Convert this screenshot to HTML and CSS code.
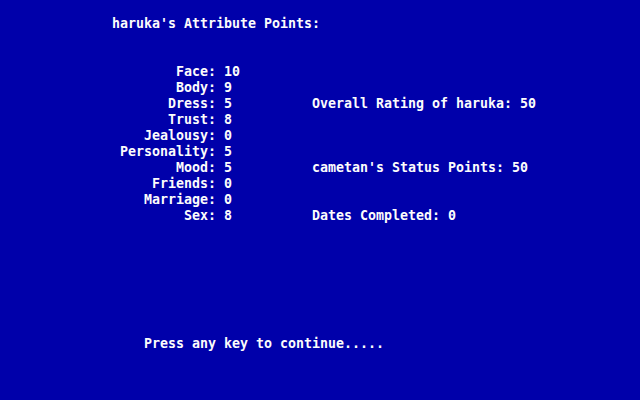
FILE: index.html
```html
<!DOCTYPE html>
<html>
<head>
<meta charset="utf-8">
<link rel="stylesheet" href="styles.css">
</head>
<body>
<div class="screen">
  <div class="title">haruka's Attribute Points:</div>
  <div class="stats">
    <div class="row"><span class="label">Face:</span><span class="val">10</span><span class="note"></span></div>
    <div class="row"><span class="label">Body:</span><span class="val">9</span><span class="note"></span></div>
    <div class="row"><span class="label">Dress:</span><span class="val">5</span><span class="note">Overall Rating of haruka: 50</span></div>
    <div class="row"><span class="label">Trust:</span><span class="val">8</span><span class="note"></span></div>
    <div class="row"><span class="label">Jealousy:</span><span class="val">0</span><span class="note"></span></div>
    <div class="row"><span class="label">Personality:</span><span class="val">5</span><span class="note"></span></div>
    <div class="row"><span class="label">Mood:</span><span class="val">5</span><span class="note">cametan's Status Points: 50</span></div>
    <div class="row"><span class="label">Friends:</span><span class="val">0</span><span class="note"></span></div>
    <div class="row"><span class="label">Marriage:</span><span class="val">0</span><span class="note"></span></div>
    <div class="row"><span class="label">Sex:</span><span class="val">8</span><span class="note">Dates Completed: 0</span></div>
  </div>
  <div class="prompt">Press any key to continue.....</div>
</div>
</body>
</html>
```
FILE: styles.css
```css
html, body {
  margin: 0;
  padding: 0;
  background: #0000aa;
}
.screen {
  width: 640px;
  height: 400px;
  background: #0000aa;
  color: #fcfcfc;
  font-family: "DejaVu Sans Mono", "Liberation Mono", monospace;
  font-weight: bold;
  font-size: 13.29px;
  line-height: 16px;
  white-space: nowrap;
  overflow: hidden;
}
.title {
  padding-top: 16px;
  padding-left: 112px;
}
.stats {
  margin-top: 32px;
}
.row {
  display: flex;
  height: 16px;
}
.label {
  width: 216px;
  text-align: right;
}
.val {
  margin-left: 8px;
  width: 88px;
}
.note {
  flex: 1;
}
.prompt {
  margin-top: 112px;
  padding-left: 144px;
}
```
